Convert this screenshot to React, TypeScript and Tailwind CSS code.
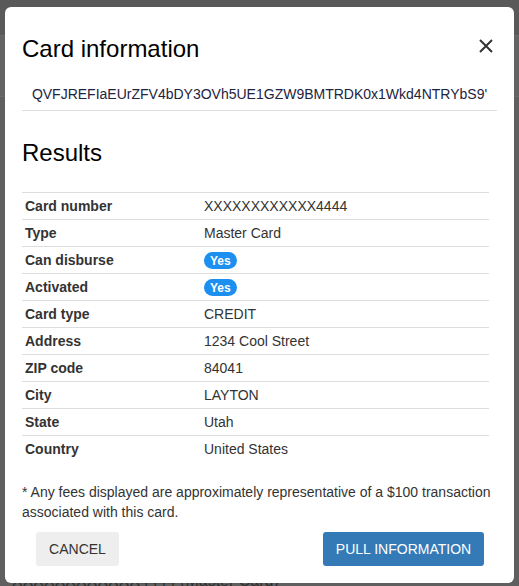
import React from 'react'

const rows: { label: string; value: string; badge?: boolean }[] = [
  { label: 'Card number', value: 'XXXXXXXXXXXX4444' },
  { label: 'Type', value: 'Master Card' },
  { label: 'Can disburse', value: 'Yes', badge: true },
  { label: 'Activated', value: 'Yes', badge: true },
  { label: 'Card type', value: 'CREDIT' },
  { label: 'Address', value: '1234 Cool Street' },
  { label: 'ZIP code', value: '84041' },
  { label: 'City', value: 'LAYTON' },
  { label: 'State', value: 'Utah' },
  { label: 'Country', value: 'United States' },
]

export default function App() {
  return (
    <div
      className="relative w-[519px] h-[586px] overflow-hidden bg-[#5f5f5f]"
      style={{ fontFamily: '"Liberation Sans", Arial, sans-serif' }}
    >
      {/* page behind the backdrop */}
      <div className="h-[36px] bg-[#595959] border-b border-[#6a6a6a]" />
      <div className="h-[61px] bg-[#636363] border-b border-[#6a6a6a]" />
      <div className="absolute left-[12px] top-[572px] text-[16px] leading-[18px] text-[#2f2f2f]">
        XXXXXXXXXXXX4444 (Master Card)
      </div>

      {/* modal */}
      <div className="absolute left-[5px] top-[7px] w-[509px] h-[576px] bg-white rounded-[6px] flex flex-col">
        <div className="flex items-start justify-between pl-[17px] pr-[20px] pt-[28px]">
          <h2 className="text-[24px] leading-[28px] text-black">Card information</h2>
          <button className="mt-[3px] text-[#333]">
            <svg width="16" height="16" viewBox="0 0 16 16" fill="none" stroke="currentColor" strokeWidth="2">
              <path d="M2 2L14 14M14 2L2 14" />
            </svg>
          </button>
        </div>

        <div className="mx-[17px] mt-[21px] pb-[6px] border-b border-[#dedede] text-center text-[14px] leading-[20px] text-[#1d2340]">
          QVFJREFIaEUrZFV4bDY3OVh5UE1GZW9BMTRDK0x1Wkd4NTRYbS9'
        </div>

        <h2 className="pl-[17px] mt-[28px] text-[24px] leading-[28px] text-black">Results</h2>

        <div className="ml-[17px] mr-[25px] mt-[25px]">
          {rows.map((r) => (
            <div
              key={r.label}
              className="flex items-center h-[27px] border-t border-[#dddddd] text-[14px] text-[#333]"
            >
              <div className="w-[182px] pl-[3px] font-bold">{r.label}</div>
              <div>
                {r.badge ? (
                  <span className="inline-flex items-center h-[17px] px-[6px] rounded-full bg-[#1c8ff0] text-white text-[12px] font-bold">
                    {r.value}
                  </span>
                ) : (
                  r.value
                )}
              </div>
            </div>
          ))}
        </div>

        <p className="mx-[17px] mt-[20px] text-[14px] leading-[20px] text-[#333]">
          * Any fees displayed are approximately representative of a $100 transaction associated with this card.
        </p>

        <div className="flex justify-between pl-[31px] pr-[30px] mt-[10px]">
          <button className="h-[34px] w-[83px] rounded-[3px] bg-[#eeeeee] text-[14px] text-[#333]">CANCEL</button>
          <button className="h-[34px] w-[161px] rounded-[3px] bg-[#337ab7] text-[14px] text-white">
            PULL INFORMATION
          </button>
        </div>
      </div>
    </div>
  )
}
